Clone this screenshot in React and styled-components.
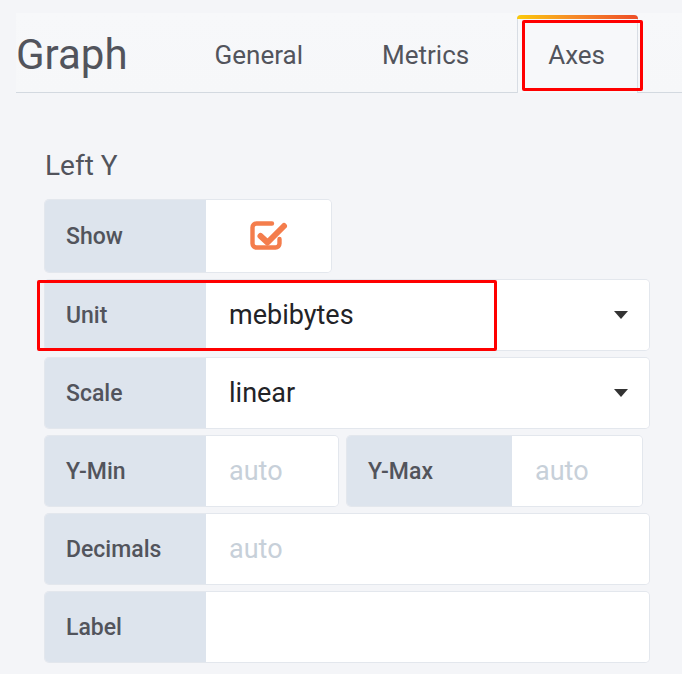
import React from "react";
import styled, { createGlobalStyle } from "styled-components";

const GlobalStyle = createGlobalStyle`
  html, body {
    margin: 0;
    padding: 0;
    background: #f4f5f8;
    font-family: Roboto, "Liberation Sans", sans-serif;
    overflow: hidden;
  }
`;

export default function App() {
  return (
    <StyledPage>
      <GlobalStyle />
      <StyledHeader>
        <StyledTitle>Graph</StyledTitle>
        <StyledTabs>
          <StyledTab>General</StyledTab>
          <StyledTab>Metrics</StyledTab>
          <StyledTab $active>
            Axes
            <StyledMark $left="4px" $top="5px" $width="121px" $height="71px" />
          </StyledTab>
        </StyledTabs>
      </StyledHeader>

      <StyledContent>
        <StyledSectionTitle>Left Y</StyledSectionTitle>
        <StyledRows>
          <StyledRow $height="72px">
            <StyledGroup>
              <StyledLabel>Show</StyledLabel>
              <StyledCheckField>
                <CheckIcon />
              </StyledCheckField>
            </StyledGroup>
          </StyledRow>

          <StyledRow>
            <StyledGroup $grow>
              <StyledLabel>Unit</StyledLabel>
              <StyledField>
                <StyledValue>mebibytes</StyledValue>
                <StyledCaret />
              </StyledField>
            </StyledGroup>
            <StyledMark $left="-8px" $top="0" $width="460px" $height="71px" />
          </StyledRow>

          <StyledRow>
            <StyledGroup $grow>
              <StyledLabel>Scale</StyledLabel>
              <StyledField>
                <StyledValue>linear</StyledValue>
                <StyledCaret />
              </StyledField>
            </StyledGroup>
          </StyledRow>

          <StyledRow $gap="9px">
            <StyledGroup $width="293px">
              <StyledLabel>Y-Min</StyledLabel>
              <StyledField>
                <StyledValue $placeholder>auto</StyledValue>
              </StyledField>
            </StyledGroup>
            <StyledGroup $width="295px">
              <StyledLabel $width="165px">Y-Max</StyledLabel>
              <StyledField>
                <StyledValue $placeholder>auto</StyledValue>
              </StyledField>
            </StyledGroup>
          </StyledRow>

          <StyledRow>
            <StyledGroup $grow>
              <StyledLabel>Decimals</StyledLabel>
              <StyledField>
                <StyledValue $placeholder>auto</StyledValue>
              </StyledField>
            </StyledGroup>
          </StyledRow>

          <StyledRow>
            <StyledGroup $grow>
              <StyledLabel>Label</StyledLabel>
              <StyledField />
            </StyledGroup>
          </StyledRow>
        </StyledRows>
      </StyledContent>
    </StyledPage>
  );
}

function CheckIcon() {
  return (
    <svg width="40" height="34" viewBox="0 0 40 34">
      <path
        d="M23 5.5H7.5a4 4 0 0 0-4 4v16a4 4 0 0 0 4 4h19a4 4 0 0 0 4-4V21"
        fill="none"
        stroke="#f47d4c"
        strokeWidth="4.4"
        strokeLinecap="round"
      />
      <path
        d="M11.5 18l7 6.5L35 8"
        fill="none"
        stroke="#f47d4c"
        strokeWidth="6"
        strokeLinecap="round"
        strokeLinejoin="round"
      />
    </svg>
  );
}

const StyledPage = styled.div`
  width: 682px;
  height: 674px;
  padding: 13px 0 0 16px;
  box-sizing: border-box;
`;

const StyledHeader = styled.header`
  display: flex;
  align-items: stretch;
  height: 79px;
  background: linear-gradient(#f7f8fa, #f6f7f9);
  border-bottom: 1px solid #d3d9e0;
`;

const StyledTitle = styled.h1`
  margin: 0 56px 0 0;
  display: flex;
  align-items: center;
  padding-top: 4px;
  font-size: 42px;
  font-weight: 400;
  color: #52545c;
`;

const StyledTabs = styled.nav`
  display: flex;
  gap: 15px;
  padding-top: 2px;
`;

const StyledTab = styled.div`
  position: relative;
  display: flex;
  align-items: center;
  padding: 2px 32px 0 30px;
  font-size: 26px;
  color: #52545c;
  border: 1px solid ${({ $active }) => ($active ? "#d8dde4" : "transparent")};
  border-top: none;
  border-bottom: none;
  margin-bottom: ${({ $active }) => ($active ? "-1px" : "0")};
  background: ${({ $active }) => ($active ? "#f7f8fa" : "transparent")};
  border-radius: 4px 4px 0 0;

  &::before {
    content: "";
    display: ${({ $active }) => ($active ? "block" : "none")};
    position: absolute;
    left: -1px;
    right: -1px;
    top: 0;
    height: 4px;
    border-radius: 4px 4px 0 0;
    background: linear-gradient(90deg, #fbca0a, #f68c28 45%, #ee4d27);
  }
`;

const StyledMark = styled.div`
  position: absolute;
  left: ${({ $left }) => $left};
  top: ${({ $top }) => $top};
  width: ${({ $width }) => $width};
  height: ${({ $height }) => $height};
  border: 3px solid #f00;
  box-sizing: border-box;
  border-radius: 2px;
  pointer-events: none;
`;

const StyledContent = styled.main`
  margin-left: 29px;
  width: 604px;
`;

const StyledSectionTitle = styled.h2`
  margin: 56px 0 17px;
  font-size: 28px;
  line-height: 34px;
  font-weight: 400;
  color: #52545c;
`;

const StyledRows = styled.div`
  display: flex;
  flex-direction: column;
  gap: 8px;
`;

const StyledRow = styled.div`
  position: relative;
  display: flex;
  gap: ${({ $gap }) => $gap || "0"};
  height: ${({ $height }) => $height || "70px"};
`;

const StyledGroup = styled.div`
  display: flex;
  flex: ${({ $grow }) => ($grow ? "1" : "none")};
  width: ${({ $width }) => $width || "auto"};
  border-radius: 4px;
  box-shadow: 0 0 0 1px #e3e7ed;
  overflow: hidden;
`;

const StyledLabel = styled.div`
  display: flex;
  align-items: center;
  width: ${({ $width }) => $width || "161px"};
  flex: none;
  padding-left: 21px;
  box-sizing: border-box;
  background: #dde4ed;
  font-size: 23px;
  font-weight: 500;
  color: #52545c;
`;

const StyledField = styled.div`
  flex: 1;
  display: flex;
  align-items: center;
  padding: 0 21px 0 23px;
  background: #fff;
`;

const StyledCheckField = styled.div`
  width: 125px;
  display: flex;
  align-items: center;
  justify-content: center;
  background: #fff;
  padding-bottom: 2px;
`;

const StyledValue = styled.span`
  flex: 1;
  font-size: 27px;
  color: ${({ $placeholder }) => ($placeholder ? "#c7d0d9" : "#222327")};
`;

const StyledCaret = styled.span`
  width: 0;
  height: 0;
  border-left: 7px solid transparent;
  border-right: 7px solid transparent;
  border-top: 8px solid #333;
`;
